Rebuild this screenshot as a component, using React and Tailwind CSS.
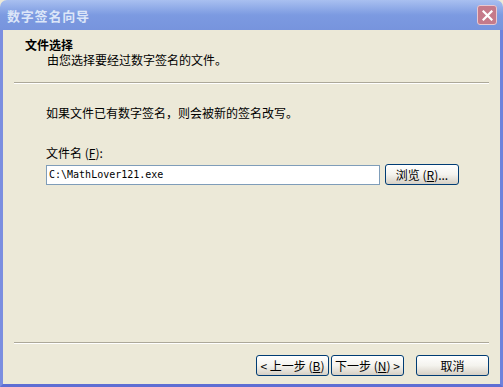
import React from "react";

const cjk = { fontFamily: '"Noto Sans CJK SC", "Noto Sans", sans-serif' };

function XpButton({ children, className = "" }) {
  return (
    <button
      className={
        "flex items-center justify-center h-[21px] rounded-[3px] border border-[#003C74] bg-gradient-to-b from-[#FFFFFF] via-[#F4F3EE] to-[#D6D0C5] text-[12px] leading-none text-black " +
        className
      }
      style={cjk}
    >
      {children}
    </button>
  );
}

export default function App() {
  return (
    <div className="w-[503px] h-[387px] flex flex-col overflow-hidden bg-[#ECE9D8]" style={cjk}>
      {/* Title bar */}
      <div className="h-[30px] shrink-0 flex items-center justify-between rounded-t-[7px] bg-gradient-to-b from-[#A9C0F0] via-[#7C9AE1] to-[#7794DD] pl-[7px] pr-[6px]">
        <span className="text-[13px] font-bold tracking-[0.8px] text-[#DCE6F8] leading-none">数字签名向导</span>
        <div className="w-[20px] h-[20px] rounded-[3px] border border-[#E8C8D0] bg-[#C57A8A] flex items-center justify-center">
          <svg width="11" height="11" viewBox="0 0 11 11">
            <path d="M1.5 1.5 L9.5 9.5 M9.5 1.5 L1.5 9.5" stroke="#FFFFFF" strokeWidth="2.2" strokeLinecap="square" />
          </svg>
        </div>
      </div>

      {/* Window body with borders */}
      <div className="flex-1 flex border-x-[3px] border-b-[3px] border-l-[#7B8EE0] border-r-[#6E82DC] border-b-[#5E6ED3]">
        <div className="flex-1 flex flex-col bg-[#ECE9D8] text-[12px] text-black">
          {/* Header */}
          <div className="pl-[22px] pt-[8px] font-bold leading-[14px]">文件选择</div>
          <div className="pl-[44px] mt-[1px] leading-[14px]">由您选择要经过数字签名的文件。</div>
          <div className="mx-[11px] mt-[15px] border-t border-t-[#ACA899] border-b border-b-white" />

          {/* Content */}
          <div className="pl-[43px] mt-[22px] leading-[14px]">如果文件已有数字签名，则会被新的签名改写。</div>
          <div className="pl-[43px] mt-[26px] leading-[14px]">
            文件名 (<span className="underline">F</span>):
          </div>
          <div className="pl-[43px] mt-[4px] flex items-center gap-[5px]">
            <div className="w-[334px] h-[20px] border border-[#7F9DB9] bg-white flex items-center pl-[2px]">
              <span className="text-[10px] leading-none" style={{ fontFamily: '"DejaVu Sans Mono", "Liberation Mono", monospace' }}>
                C:\MathLover121.exe
              </span>
            </div>
            <XpButton className="w-[74px] h-[20px]">
              浏览 (<span className="underline">R</span>)...
            </XpButton>
          </div>

          <div className="flex-1" />

          {/* Footer */}
          <div className="mx-[11px] border-t border-t-[#ACA899] border-b border-b-white" />
          <div className="mt-[11px] mb-[8px] pr-[11px] flex justify-end">
            <XpButton className="w-[73px]">
              &lt; 上一步 (<span className="underline">B</span>)
            </XpButton>
            <XpButton className="w-[73px] ml-[2px]">
              下一步 (<span className="underline">N</span>) &gt;
            </XpButton>
            <XpButton className="w-[73px] ml-[12px]">取消</XpButton>
          </div>
        </div>
      </div>
    </div>
  );
}
